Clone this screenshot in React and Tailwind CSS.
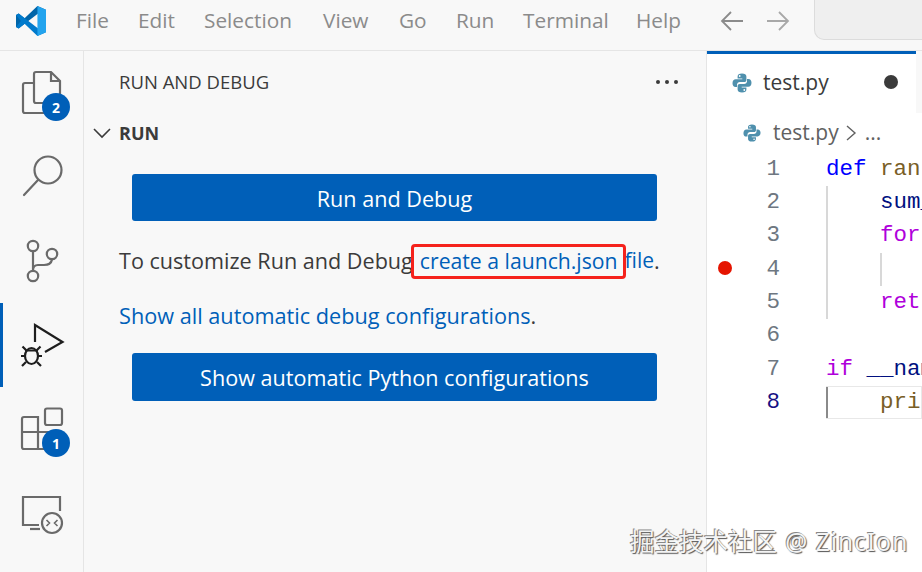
const UI = "font-['Open_Sans','Noto_Sans',sans-serif]"

const MENU = [
  ['File', 'w-[62px]'],
  ['Edit', 'w-[66px]'],
  ['Selection', 'w-[119px]'],
  ['View', 'w-[76px]'],
  ['Go', 'w-[57px]'],
  ['Run', 'w-[67px]'],
  ['Terminal', 'w-[113px]'],
  ['Help', 'w-[59px]'],
]

function Logo() {
  return (
    <svg width="30" height="30" viewBox="0 0 28 28" className="shrink-0">
      <path d="M0 8.5 2.5 7 8 11.5 20 0 28 3.5 20 7.5 11.5 14 2.5 21 0 19.5Z" fill="#0065a9" />
      <path d="M2.5 7 20 20.5 28 24.5 20 28 8 16.5 2.5 21 0 19.5 4.5 14 0 8.5Z" fill="#007acc" />
      <path d="M20 0 28 3.5V24.5L20 28Z" fill="#23a4ee" />
    </svg>
  )
}

function PythonIcon({ size }) {
  return (
    <svg width={size} height={size} viewBox="0 0 20 20" className="shrink-0">
      <path d="M10 0.5C7 0.5 5.6 1.6 5.6 3.4V5.4H10.3V6.2H3.8C1.8 6.2 0.5 7.8 0.5 10.2C0.5 12.6 1.7 14 3.5 14H5V11.8C5 10.2 6.3 9 7.9 9H12.3C13.5 9 14.4 8.1 14.4 6.9V3.4C14.4 1.6 12.8 0.5 10 0.5ZM7.7 2.1A.9.9 0 1 1 7.7 3.9.9.9 0 0 1 7.7 2.1Z" fill="#4f90ad" />
      <path d="M10 19.5C13 19.5 14.4 18.4 14.4 16.6V14.6H9.7V13.8H16.2C18.2 13.8 19.5 12.2 19.5 9.8C19.5 7.4 18.3 6 16.5 6H15V8.2C15 9.8 13.7 11 12.1 11H7.7C6.5 11 5.6 11.9 5.6 13.1V16.6C5.6 18.4 7.2 19.5 10 19.5ZM12.3 17.9A.9.9 0 1 1 12.3 16.1.9.9 0 0 1 12.3 17.9Z" fill="#4f90ad" />
    </svg>
  )
}

function Badge({ n }) {
  return (
    <span className="absolute left-[42px] top-[42px] w-7 h-7 rounded-full bg-[#005fb8] text-white text-[14px] font-bold flex items-center justify-center">
      {n}
    </span>
  )
}

const activityIcon = 'fill-none stroke-[#6a6a6a] stroke-[2.2]'

const ACTIVITY = [
  {
    badge: 2,
    icon: (
      <svg width="44" height="48" viewBox="0 0 44 48" className={activityIcon}>
        <path d="M14 14V5Q14 3 16 3H31L40 12V32Q40 34 38 34H32" />
        <path d="M31 3V12H40" />
        <path d="M14 14H5Q3 14 3 16V42Q3 44 5 44H30Q32 44 32 42V34" />
        <path d="M14 14V32Q14 34 16 34H32" />
      </svg>
    ),
  },
  {
    icon: (
      <svg width="44" height="44" viewBox="0 0 44 44" className={activityIcon}>
        <circle cx="28" cy="15" r="13.5" />
        <path d="M18 25 4 40" strokeLinecap="round" />
      </svg>
    ),
  },
  {
    icon: (
      <svg width="44" height="44" viewBox="0 0 44 44" className={activityIcon}>
        <circle cx="13" cy="7" r="5.2" />
        <circle cx="13" cy="37" r="5.2" />
        <circle cx="32" cy="15" r="5.2" />
        <path d="M13 12.500V31.500M32 20.500Q31 26 24 26H18Q13 26 13 31.500" />
      </svg>
    ),
  },
  {
    active: true,
    icon: (
      <svg width="48" height="50" viewBox="0 0 48 50" className="fill-none stroke-[#1e1e1e] stroke-[2.2]">
        <path d="M17 22V5L44.500 22 27 32" />
        <ellipse cx="13.500" cy="36" rx="6.500" ry="8" />
        <path d="M7 30.500H20M7 36H3M20 36H24M8 30 4.500 26.500M19 30 22.500 26.500M8 42 4 46M19 42 23 46" />
      </svg>
    ),
  },
  {
    badge: 1,
    icon: (
      <svg width="44" height="44" viewBox="0 0 44 44" className={activityIcon}>
        <rect x="25" y="1.500" width="17" height="16.500" rx="2" />
        <path d="M4 10H18V42H4Q2 42 2 40V12Q2 10 4 10ZM2 25H35V40Q35 42 33 42H18" />
      </svg>
    ),
  },
  {
    icon: (
      <svg width="44" height="44" viewBox="0 0 44 44" className={activityIcon}>
        <path d="M19 34H3V6H40V20" />
        <path d="M10 38H20" />
        <circle cx="32" cy="32" r="10" />
        <path d="M26.500 29 29.500 32 26.500 35M37.500 29 34.500 32 37.500 35" strokeWidth="1.600" />
      </svg>
    ),
  },
]

function ActivityBar() {
  return (
    <div className="w-[84px] shrink-0 bg-[#f8f8f8] border-r border-[#e5e5e5] flex flex-col">
      {ACTIVITY.map((item, i) => (
        <div key={i} className={`h-[84px] relative flex items-center justify-center ${item.active ? 'border-l-[3px] border-[#005fb8] pr-[3px]' : ''}`}>
          {item.icon}
          {item.badge && <Badge n={item.badge} />}
        </div>
      ))}
    </div>
  )
}

function BlueButton({ children, className }) {
  return (
    <div className={`${className} ml-[48px] w-[525px] rounded-[3px] bg-[#005fb8] text-white text-[21.6px] flex items-center justify-center`}>
      {children}
    </div>
  )
}

function Sidebar() {
  return (
    <div className="w-[623px] shrink-0 bg-[#f8f8f8] border-r border-[#e5e5e5] text-[#3b3b3b]">
      <div className="h-[62px] pl-[35px] pr-[28px] flex items-center justify-between text-[18.5px]">
        <span>RUN AND DEBUG</span>
        <span className="flex gap-[5px]">
          <i className="w-[4px] h-[4px] rounded-full bg-[#3b3b3b]" />
          <i className="w-[4px] h-[4px] rounded-full bg-[#3b3b3b]" />
          <i className="w-[4px] h-[4px] rounded-full bg-[#3b3b3b]" />
        </span>
      </div>
      <div className="h-[40px] pl-[9px] flex items-center text-[18px] font-bold">
        <svg width="18" height="12" viewBox="0 0 18 12" className="mr-[8px] fill-none stroke-[#3b3b3b] stroke-[1.6]">
          <path d="M1 2 9 10 17 2" />
        </svg>
        RUN
      </div>
      <div className="mt-[21px]">
        <BlueButton className="h-[47px] pt-[3px]">Run and Debug</BlueButton>
      </div>
      <div className="mt-[20px] pl-[35px] text-[21.6px] h-[40px] flex items-center whitespace-nowrap">
        <span>To customize Run and Debug</span>
        <span className="ml-[-2px] h-[35px] pl-[6px] pr-[5px] flex items-center border-[3px] border-[#f5221c] rounded-[4px] text-[#005fb8] text-[21.2px] relative">create a launch.json</span>
        <span className="text-[#005fb8] text-[21px] ml-[-1px]">file</span>.
      </div>
      <div className="mt-[15px] pl-[35px] text-[21.7px] h-[40px] flex items-center whitespace-nowrap">
        <span className="text-[#005fb8]">Show all automatic debug configurations</span>.
      </div>
      <div className="mt-[17px]">
        <BlueButton className="h-[48px] pt-[2px]">Show automatic Python configurations</BlueButton>
      </div>
    </div>
  )
}

const KW = 'text-[#0000ff]'
const CTRL = 'text-[#af00db]'
const VAR = 'text-[#001080]'
const FN = 'text-[#795e26]'

const CODE = [
  { guides: 0, text: 'def', color: KW, rest: ' ran', restColor: FN },
  { guides: 1, text: 'sum_', color: VAR },
  { guides: 1, text: 'for', color: CTRL },
  { guides: 2, text: '', breakpoint: true },
  { guides: 1, text: 'ret', color: CTRL },
  { guides: 0, text: '' },
  { guides: 0, text: 'if', color: CTRL, rest: ' __nam', restColor: VAR },
  { guides: 1, text: 'pri', color: FN, current: true },
]

function Editor() {
  return (
    <div className="flex-1 min-w-0 bg-white flex flex-col overflow-hidden">
      <div className="h-[62px] bg-[#f8f8f8] flex shrink-0">
        <div className="w-[209px] bg-white border-t-[3px] border-[#005fb8] flex items-center pl-[25px] pb-[2px]">
          <PythonIcon size={20} />
          <span className="ml-[11px] text-[21px] text-[#3b3b3b]">test.py</span>
          <span className="ml-[55px] mb-[2px] w-[14px] h-[14px] rounded-full bg-[#3b3b3b]" />
        </div>
      </div>
      <div className="h-[38px] pl-[36px] pt-[2px] flex items-center text-[#616161] text-[21px] shrink-0">
        <PythonIcon size={18} />
        <span className="ml-[12px]">test.py</span>
        <svg width="12" height="18" viewBox="0 0 12 18" className="ml-[6px] fill-none stroke-[#616161] stroke-[1.4]">
          <path d="M2 2 10 9 2 16" />
        </svg>
        <span className="ml-[8px]">...</span>
      </div>
      <div className="font-['Liberation_Mono','DejaVu_Sans_Mono',monospace] text-[22.5px] pt-[2px]">
        {CODE.map((line, i) => (
          <div key={i} className="h-[33.3px] flex items-center whitespace-pre">
            <span className="w-[15px] ml-[10px] shrink-0 flex justify-center">
              {line.breakpoint && <i className="w-[14px] h-[14px] rounded-full bg-[#e51400] mb-[3px]" />}
            </span>
            <span className={`w-[48px] shrink-0 text-right ${line.current ? 'text-[#171184]' : 'text-[#6e7781]'}`}>{i + 1}</span>
            <span className="w-[46px] shrink-0" />
            <div className={`flex-1 h-full flex items-center box-border ${line.current ? 'border border-l-0 border-[#e8e8e8]' : ''}`}>
              {line.guides >= 1 && <span className={`w-[54px] h-full shrink-0 border-l-2 ${line.current ? 'border-[#8a8a8a]' : 'border-[#d8d8d8]'}`} />}
              {line.guides >= 2 && <span className="h-full border-l-2 border-[#d8d8d8]" />}
              <span className={line.color}>{line.text}</span>
              {line.rest && <span className={line.restColor}>{line.rest}</span>}
            </div>
          </div>
        ))}
      </div>
    </div>
  )
}

export default function App() {
  return (
    <div className={`${UI} w-[922px] h-[572px] relative overflow-hidden flex flex-col bg-white`}>
      <div className="h-[51px] shrink-0 bg-[#f8f8f8] border-b border-[#e5e5e5] flex items-center pl-[16px] pb-[9px]">
        <Logo />
        <div className="flex ml-[30px] text-[20.8px] text-[#8b8b8b]">
          {MENU.map(([label, w]) => (
            <span key={label} className={w}>{label}</span>
          ))}
        </div>
        <svg width="24" height="22" viewBox="0 0 24 22" className="ml-[25px] fill-none stroke-[#8b8b8b] stroke-[1.8]">
          <path d="M23 11H2M11 2 2 11 11 20" />
        </svg>
        <svg width="24" height="22" viewBox="0 0 24 22" className="ml-[22px] fill-none stroke-[#a8a8a8] stroke-[1.8]">
          <path d="M1 11H22M13 2 22 11 13 20" />
        </svg>
        <div className="ml-[24px] flex-1 self-start h-[40px] bg-[#efefef] border border-t-0 border-r-0 border-[#dcdcdc] rounded-bl-[10px]" />
      </div>
      <div className="flex flex-1 min-h-0">
        <ActivityBar />
        <Sidebar />
        <Editor />
      </div>
      <div className="absolute left-[630px] top-[526px] text-[24.500px] leading-[32px] whitespace-nowrap text-[#f4f4f4] [word-spacing:2px] [text-shadow:1px_1px_1px_#555,-1px_-1px_0_#888] font-['Noto_Sans','Noto_Sans_CJK_SC',sans-serif]">
        掘金技术社区 @ <span className="tracking-[1px]">ZincIon</span>
      </div>
    </div>
  )
}
